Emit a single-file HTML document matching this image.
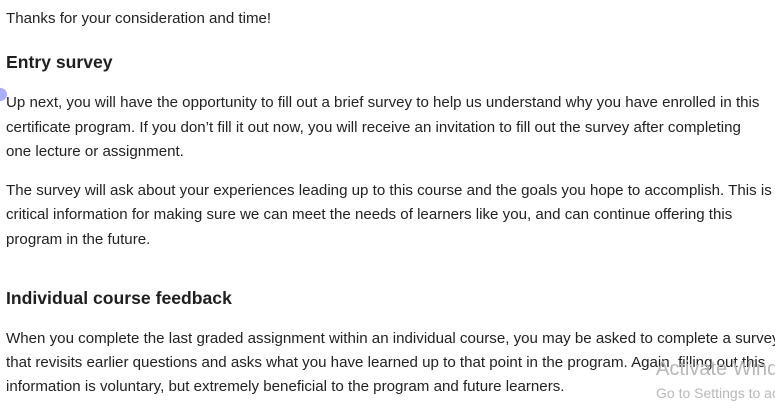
<!DOCTYPE html>
<html><head><meta charset="utf-8"><style>
html,body{margin:0;width:775px;height:419px;overflow:hidden}
body{background:#fff;font-family:"Liberation Sans",sans-serif;color:#1f1f1f;position:relative}
.l{position:absolute;left:6px;font-size:15.1px;white-space:nowrap;line-height:18px;color:#222}
.h{position:absolute;left:6px;font-size:17.6px;font-weight:bold;white-space:nowrap;line-height:22px;color:#1f1f1f}
.w{position:absolute;left:656px;color:#b8b8b8;white-space:nowrap;width:119px;overflow:hidden}
.dot{position:absolute;left:-6px;top:88px;width:13px;height:13px;border-radius:50%;background:#a9aef5}
</style></head><body>
<div class="l" style="top:10px">Thanks for your consideration and time!</div>
<div class="h" style="top:51px">Entry survey</div>
<div class="dot"></div>
<div class="l" style="top:94px">Up next, you will have the opportunity to fill out a brief survey to help us understand why you have enrolled in this</div>
<div class="l" style="top:119px">certificate program. If you don’t fill it out now, you will receive an invitation to fill out the survey after completing</div>
<div class="l" style="top:143px">one lecture or assignment.</div>
<div class="l" style="top:182px">The survey will ask about your experiences leading up to this course and the goals you hope to accomplish. This is</div>
<div class="l" style="top:206px">critical information for making sure we can meet the needs of learners like you, and can continue offering this</div>
<div class="l" style="top:231px">program in the future.</div>
<div class="h" style="top:287px">Individual course feedback</div>
<div class="l" style="top:330px">When you complete the last graded assignment within an individual course, you may be asked to complete a survey</div>
<div class="l" style="top:354px">that revisits earlier questions and asks what you have learned up to that point in the program. Again, filling out this</div>
<div class="l" style="top:378px">information is voluntary, but extremely beneficial to the program and future learners.</div>
<div class="w" style="top:358px;font-size:20px">Activate Windows</div>
<div class="w" style="top:385px;font-size:14px">Go to Settings to activate</div>
</body></html>
